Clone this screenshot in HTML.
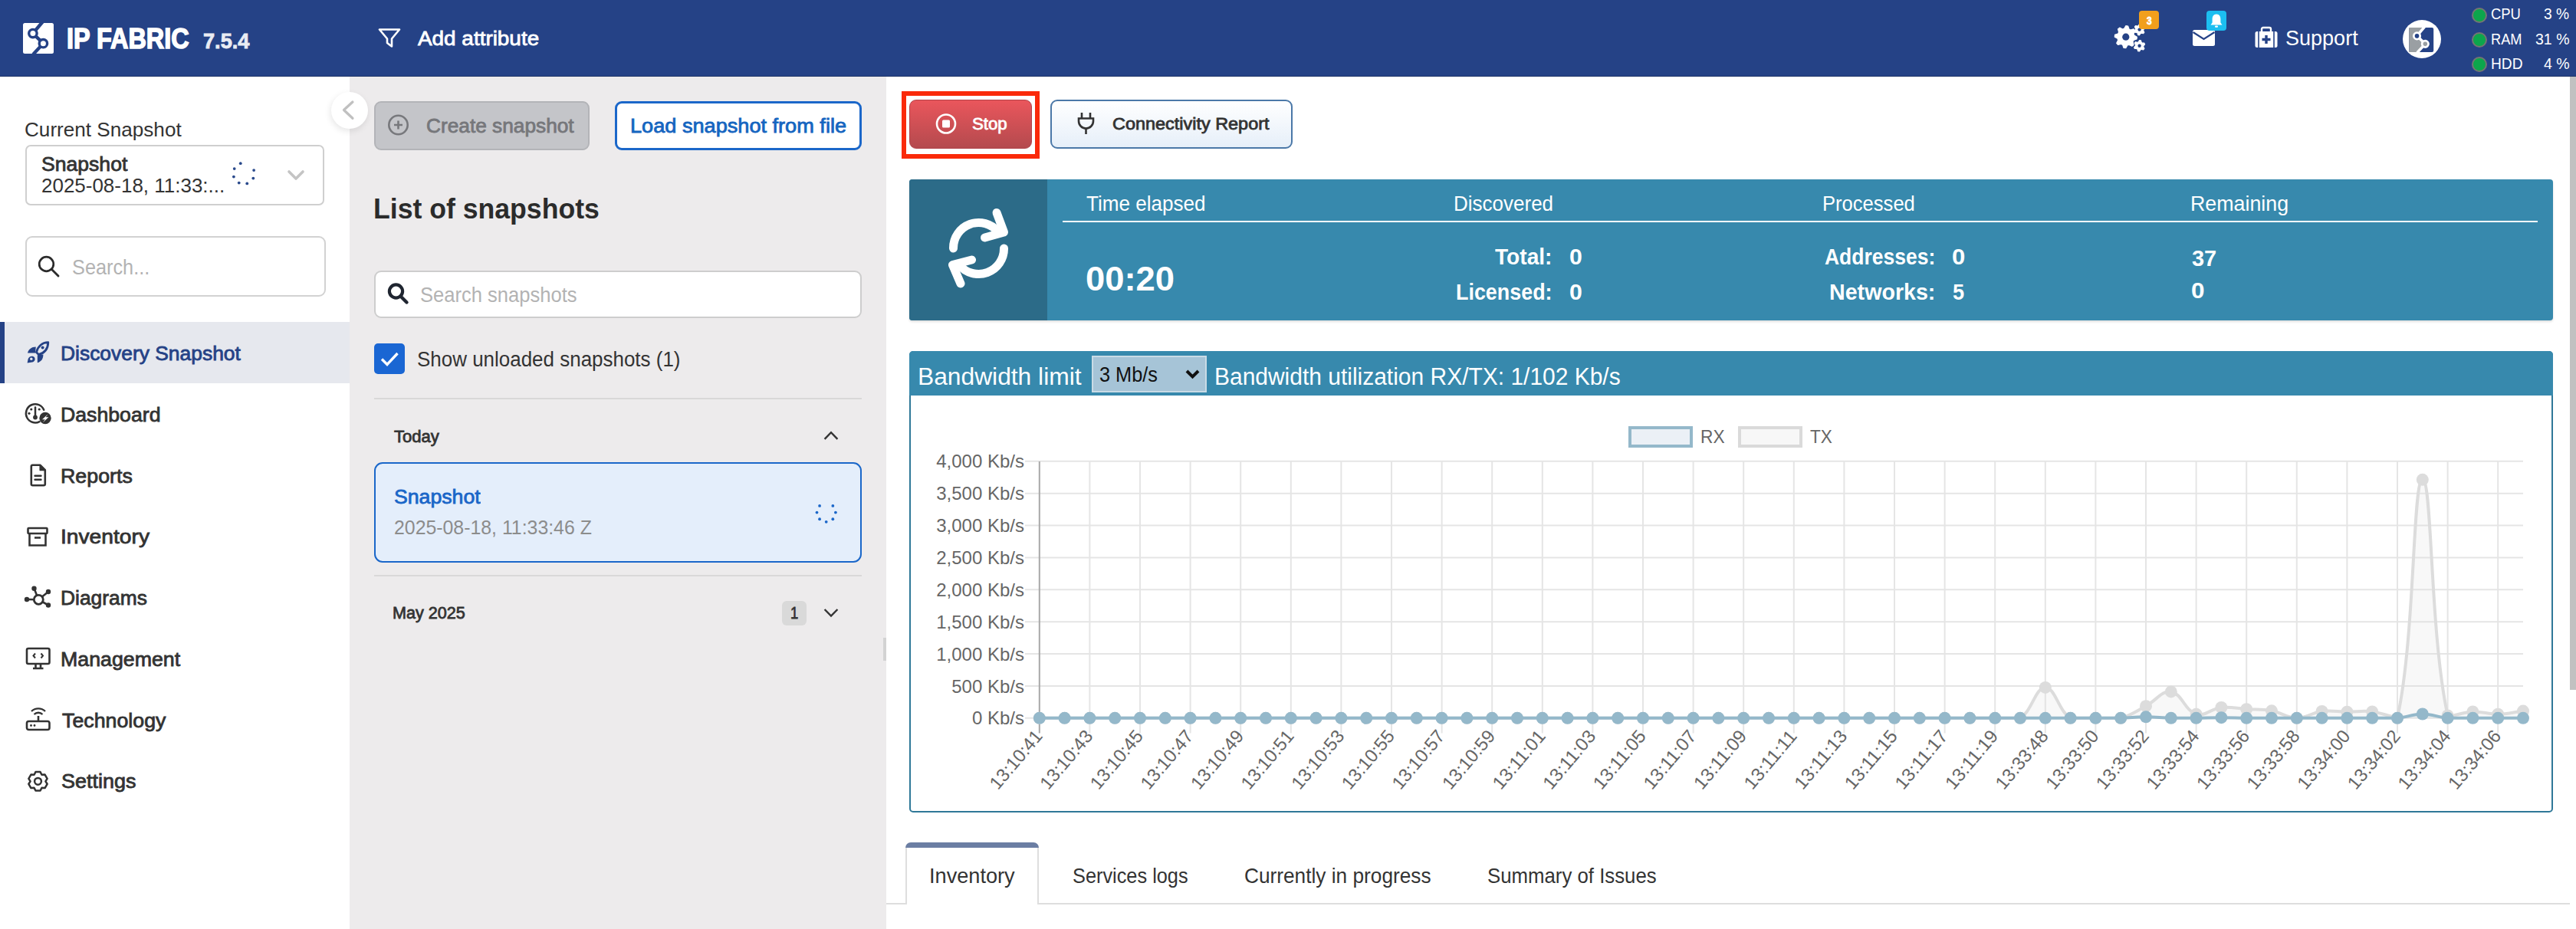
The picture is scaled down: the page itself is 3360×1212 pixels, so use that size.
<!DOCTYPE html>
<html><head><meta charset="utf-8"><title>IP Fabric</title>
<style>
html,body{margin:0;padding:0;width:3360px;height:1212px;overflow:hidden;background:#fff;font-family:"Liberation Sans",sans-serif;}
.a{position:absolute;box-sizing:border-box;}
.t{position:absolute;white-space:nowrap;line-height:1;transform-origin:0 0;font-family:"Liberation Sans",sans-serif;}
svg{position:absolute;overflow:visible;}
</style></head><body>
<div class="a" style="left:0px;top:0px;width:3360px;height:100px;background:#254286;"></div>
<div class="a" style="left:0px;top:99px;width:3360px;height:1px;background:#1f3568;"></div>
<div class="a" style="left:0px;top:100px;width:456px;height:1112px;background:#ffffff;"></div>
<div class="a" style="left:456px;top:100px;width:700px;height:1112px;background:#edebec;"></div>
<div class="a" style="left:3352px;top:100px;width:8px;height:800px;background:#c1c1c1;"></div>
<svg style="left:30px;top:30px" width="40" height="40" viewBox="0 0 40 40"><rect x="0" y="0" width="40" height="40" rx="2.5" fill="#fff"/><path d="M26,-2 L12.9,13.6 L26.4,26.7 L13.2,41" stroke="#254286" stroke-width="4.4" fill="none"/><circle cx="12.9" cy="13.6" r="5.2" fill="#fff" stroke="#254286" stroke-width="3.4"/><circle cx="26.4" cy="26.7" r="5.2" fill="#fff" stroke="#254286" stroke-width="3.4"/></svg>
<svg style="left:492px;top:36px" width="32" height="28" viewBox="0 0 32 28"><path d="M3,2.5 L29,2.5 L19,14.5 L19,24.5 L13,20 L13,14.5 Z" stroke="#fff" stroke-width="2.6" fill="none" stroke-linejoin="round"/></svg>
<svg style="left:2750px;top:20px" width="80" height="60" viewBox="0 0 80 60"><polygon points="22.80,13.70 25.63,13.98 27.01,18.04 28.91,19.05 33.05,17.95 34.86,20.14 32.96,23.99 33.59,26.05 37.30,28.20 37.02,31.03 32.96,32.41 31.95,34.31 33.05,38.45 30.86,40.26 27.01,38.36 24.95,38.99 22.80,42.70 19.97,42.42 18.59,38.36 16.69,37.35 12.55,38.45 10.74,36.26 12.64,32.41 12.01,30.35 8.30,28.20 8.58,25.37 12.64,23.99 13.65,22.09 12.55,17.95 14.74,16.14 18.59,18.04 20.65,17.41" fill="#fff" stroke="#fff" stroke-width="1.2" stroke-linejoin="round"/><circle cx="22.8" cy="28.2" r="4.6" fill="#254286"/><polygon points="40.60,11.40 42.46,11.65 43.20,14.10 44.28,14.92 46.84,15.00 47.55,16.74 45.80,18.60 45.62,19.95 46.84,22.20 45.69,23.69 43.20,23.10 41.95,23.62 40.60,25.80 38.74,25.55 38.00,23.10 36.92,22.28 34.36,22.20 33.65,20.46 35.40,18.60 35.58,17.25 34.36,15.00 35.51,13.51 38.00,14.10 39.25,13.58" fill="#fff" stroke="#fff" stroke-width="1.2" stroke-linejoin="round"/><circle cx="40.6" cy="18.6" r="2.2" fill="#254286"/><polygon points="40.60,32.60 42.46,32.85 43.20,35.30 44.28,36.12 46.84,36.20 47.55,37.94 45.80,39.80 45.62,41.15 46.84,43.40 45.69,44.89 43.20,44.30 41.95,44.82 40.60,47.00 38.74,46.75 38.00,44.30 36.92,43.48 34.36,43.40 33.65,41.66 35.40,39.80 35.58,38.45 34.36,36.20 35.51,34.71 38.00,35.30 39.25,34.78" fill="#fff" stroke="#fff" stroke-width="1.2" stroke-linejoin="round"/><circle cx="40.6" cy="39.8" r="2.2" fill="#254286"/></svg>
<div class="a" style="left:2790px;top:14px;width:26px;height:24px;background:#f29f1c;border-radius:4px;"></div>
<svg style="left:2860px;top:39px" width="29" height="22" viewBox="0 0 29 22"><rect x="0" y="0" width="29" height="21" rx="2.5" fill="#fff"/><path d="M0.5,3 L14.5,12 L28.5,3" stroke="#254286" stroke-width="2.2" fill="none"/></svg>
<div class="a" style="left:2878px;top:14px;width:26px;height:26px;background:#1cbef0;border-radius:4px;"></div>
<svg style="left:2878px;top:14px" width="26" height="26" viewBox="0 0 26 26"><path d="M13,4.5 C9,4.5 7.6,7.5 7.6,11 L7.6,15.5 L5.5,18.5 L20.5,18.5 L18.4,15.5 L18.4,11 C18.4,7.5 17,4.5 13,4.5 Z" fill="#fff"/><rect x="11" y="19.5" width="4" height="2.2" rx="1" fill="#fff"/></svg>
<svg style="left:2941px;top:35px" width="30" height="28" viewBox="0 0 30 28"><rect x="0.5" y="6" width="29" height="21" rx="2.5" fill="#fff"/><rect x="9" y="1" width="12" height="7" rx="2" fill="none" stroke="#fff" stroke-width="2.4"/><rect x="4.2" y="6" width="1.6" height="21" fill="#254286"/><rect x="24.2" y="6" width="1.6" height="21" fill="#254286"/><path d="M15,11 V22 M9.5,16.5 H20.5" stroke="#254286" stroke-width="3.4"/></svg>
<svg style="left:3134px;top:26px" width="50" height="50" viewBox="0 0 50 50"><circle cx="25" cy="25" r="25" fill="#fff"/><g transform="translate(8.2,10) scale(0.8)"><rect x="0" y="0" width="40" height="40" rx="2.5" fill="#254286"/><path d="M0,0 H26 L12.9,13.6 L26.4,26.7 L13.2,40 H0 Z" fill="#9a9fa3"/><path d="M26,-2 L12.9,13.6 L26.4,26.7 L13.2,41" stroke="#fff" stroke-width="4.4" fill="none"/><circle cx="12.9" cy="13.6" r="5.2" fill="#254286" stroke="#fff" stroke-width="3.4"/><circle cx="26.4" cy="26.7" r="5.2" fill="#9a9fa3" stroke="#fff" stroke-width="3.4"/></g></svg>
<div class="a" style="left:3224.0px;top:9.8px;width:20.4px;height:20.4px;border-radius:50%;background:#0ca64c;border:2.2px solid #737573;"></div>
<div class="a" style="left:3224.0px;top:41.599999999999994px;width:20.4px;height:20.4px;border-radius:50%;background:#0ca64c;border:2.2px solid #737573;"></div>
<div class="a" style="left:3224.0px;top:73.8px;width:20.4px;height:20.4px;border-radius:50%;background:#0ca64c;border:2.2px solid #737573;"></div>
<div class="a" style="left:431.5px;top:120px;width:48px;height:48px;border-radius:50%;background:#fff;box-shadow:-1px 3px 8px rgba(0,0,0,0.10);"></div>
<svg style="left:443px;top:132px" width="24" height="24" viewBox="0 0 24 24"><path d="M16.9,1 L5.5,11.5 L16.9,22.3" stroke="#c0c0c0" stroke-width="3.3" fill="none" stroke-linecap="round" stroke-linejoin="round"/></svg>
<div class="a" style="left:33px;top:189px;width:390px;height:79px;border:2px solid #cfcfcf;border-radius:7px;background:#fff;"></div>
<svg style="left:0px;top:0px" width="1" height="1" viewBox="0 0 1 1"><circle cx="313.74" cy="213.18" r="1.9" fill="#2a4a8c"/><circle cx="331.12" cy="222.04" r="1.9" fill="#2a4a8c"/><circle cx="330.30" cy="232.57" r="1.9" fill="#2a4a8c"/><circle cx="322.26" cy="239.42" r="1.9" fill="#2a4a8c"/><circle cx="311.73" cy="238.60" r="1.9" fill="#2a4a8c"/><circle cx="304.88" cy="230.56" r="1.9" fill="#2a4a8c"/><circle cx="305.70" cy="220.03" r="1.9" fill="#2a4a8c"/></svg>
<svg style="left:373px;top:219px" width="28" height="20" viewBox="0 0 28 20"><path d="M4,5 L13,14 L22,5" stroke="#c4c4c4" stroke-width="3.6" fill="none" stroke-linecap="round" stroke-linejoin="round"/></svg>
<div class="a" style="left:33px;top:308px;width:392px;height:79px;border:2px solid #d2d2d2;border-radius:9px;background:#fff;"></div>
<svg style="left:48px;top:332px" width="32" height="32" viewBox="0 0 32 32"><circle cx="12.5" cy="12.5" r="9.3" stroke="#2b2b2b" stroke-width="2.7" fill="none"/><path d="M19.5,19.5 L28,28" stroke="#2b2b2b" stroke-width="2.9" stroke-linecap="round"/></svg>
<div class="a" style="left:0px;top:420px;width:456px;height:80px;background:#e6e8ee;"></div>
<div class="a" style="left:0px;top:420px;width:6px;height:80px;background:#254286;"></div>
<svg style="left:30px;top:440px" width="40" height="40" viewBox="0 0 40 40"><path d="M32.8,6.6 C25,6.8 19.5,12 17.4,19.6 L20.4,22.6 C28,20.5 32.6,15 32.8,6.6 Z" stroke="#254286" stroke-width="2.8" fill="none" stroke-linejoin="round"/><circle cx="25.6" cy="13.4" r="2" fill="#254286"/><path d="M6,20.4 C7.5,15.5 11,12.8 16.8,12.6 L16,20.4 Z" fill="#254286"/><path d="M18.8,33.2 C23.5,32 26.4,28.5 26.4,22.5 L18.8,23.3 Z" fill="#254286"/><path d="M5.6,33.4 L6.6,28.5 C7.5,24.5 12.5,23.5 14.8,26 C16.5,28.5 15.5,31.8 12,32.6 Z" fill="#254286"/><circle cx="10.8" cy="28.3" r="1.7" fill="#e6e8ee"/></svg>
<svg style="left:28px;top:518px" width="44" height="44" viewBox="0 0 44 44"><path d="M29.2,16.8 A12.1,12.1 0 1 0 23.5,32.1" stroke="#333333" stroke-width="2.5" fill="none" stroke-linecap="round"/><path d="M18,13.6 V25" stroke="#333333" stroke-width="2.5" stroke-linecap="round"/><circle cx="18" cy="26.5" r="2.9" fill="#333333"/><circle cx="12.8" cy="16" r="1.6" fill="#333333"/><circle cx="23.2" cy="16" r="1.6" fill="#333333"/><circle cx="10" cy="21.3" r="1.6" fill="#333333"/><circle cx="31" cy="27.5" r="7.7" fill="#333333"/><path d="M34.6,22.3 L27,29.2 L30.8,29.2 L27.8,33.2 L35.4,26.2 L31.6,26.2 Z" fill="#fff"/></svg>
<svg style="left:38px;top:605px" width="24" height="32" viewBox="0 0 24 32"><path d="M2.8,3.5 Q2.8,1.8 4.5,1.8 H14.5 L20.8,8.2 V26.5 Q20.8,28.2 19.1,28.2 H4.5 Q2.8,28.2 2.8,26.5 Z" stroke="#333333" stroke-width="2.6" fill="none" stroke-linejoin="round"/><path d="M14.2,1.8 L21,8.5 H14.2 Z" fill="#333333" stroke="#333333" stroke-width="1.5" stroke-linejoin="round"/><path d="M7.5,15.8 H15.5 M7.5,20.8 H15.5" stroke="#333333" stroke-width="2.4" stroke-linecap="round"/></svg>
<svg style="left:34px;top:685px" width="32" height="32" viewBox="0 0 32 32"><rect x="2.5" y="4" width="25" height="7" rx="1" stroke="#333333" stroke-width="2.6" fill="none"/><path d="M4.5,11 V26.5 H25.5 V11" stroke="#333333" stroke-width="2.6" fill="none"/><path d="M11,16.5 H19" stroke="#333333" stroke-width="2.6"/></svg>
<svg style="left:26px;top:758px" width="50" height="50" viewBox="0 0 50 50"><path d="M24.3,24.3 L18.5,9.8 M24.3,24.3 L37,14 M24.3,24.3 L37,31.5 M24.3,24.3 L9,24" stroke="#333333" stroke-width="2.6"/><circle cx="24.3" cy="24.3" r="6" stroke="#333333" stroke-width="2.8" fill="#fff"/><circle cx="18.5" cy="9.8" r="3.2" fill="#333333"/><circle cx="37" cy="14" r="3.2" fill="#333333"/><circle cx="37" cy="31.5" r="3.2" fill="#333333"/><circle cx="9" cy="24" r="3.2" fill="#333333"/></svg>
<svg style="left:33px;top:844px" width="34" height="32" viewBox="0 0 34 32"><rect x="2" y="2" width="29.5" height="20" rx="2" stroke="#333333" stroke-width="2.6" fill="none"/><path d="M13,8.5 L10.5,11.5 L13,14.5 M20.5,8.5 L23,11.5 L20.5,14.5" stroke="#333333" stroke-width="2" fill="none"/><path d="M13.5,22 V27 M20,22 V27 M10,28 H23.5" stroke="#333333" stroke-width="2.6"/></svg>
<svg style="left:33px;top:923px" width="34" height="32" viewBox="0 0 34 32"><rect x="2" y="18" width="29.5" height="11" rx="2.5" stroke="#333333" stroke-width="2.6" fill="none"/><circle cx="7.5" cy="23.5" r="1.4" fill="#333333"/><circle cx="12" cy="23.5" r="1.4" fill="#333333"/><path d="M17,18 V11" stroke="#333333" stroke-width="2.6"/><path d="M11.5,9 A8,8 0 0 1 22.5,9 M8,5 A13,13 0 0 1 26,5" stroke="#333333" stroke-width="2.4" fill="none"/></svg>
<svg style="left:28px;top:998px" width="42" height="42" viewBox="0 0 42 42"><polygon points="16.55,12.73 18.45,9.07 24.55,9.07 26.45,12.73 30.56,12.55 33.61,17.83 31.40,21.30 33.61,24.77 30.56,30.05 26.45,29.87 24.55,33.53 18.45,33.53 16.55,29.87 12.44,30.05 9.39,24.77 11.60,21.30 9.39,17.83 12.44,12.55" stroke="#333333" stroke-width="2.5" fill="none" stroke-linejoin="round"/><circle cx="21.5" cy="21.3" r="4.4" stroke="#333333" stroke-width="2.5" fill="none"/></svg>
<div class="a" style="left:488px;top:132px;width:281px;height:64px;background:#c4c5c9;border:2px solid #b3b4b8;border-radius:9px;"></div>
<svg style="left:504px;top:149px" width="32" height="30" viewBox="0 0 32 30"><circle cx="15.5" cy="14" r="12.2" stroke="#77787c" stroke-width="2.6" fill="none"/><path d="M15.5,8.5 V19.5 M10,14 H21" stroke="#77787c" stroke-width="2.6"/></svg>
<div class="a" style="left:802px;top:132px;width:322px;height:64px;background:#fff;border:3px solid #1b67c9;border-radius:9px;"></div>
<div class="a" style="left:488px;top:353px;width:636px;height:62px;background:#fff;border:2px solid #cdcdcd;border-radius:9px;"></div>
<svg style="left:504px;top:368px" width="32" height="32" viewBox="0 0 32 32"><circle cx="12.5" cy="12" r="8.6" stroke="#1f2530" stroke-width="4.2" fill="none"/><path d="M18.5,18.5 L26.5,26.5" stroke="#1f2530" stroke-width="4.4" stroke-linecap="round"/></svg>
<div class="a" style="left:488px;top:448px;width:40px;height:40px;background:#1a66d3;border-radius:5px;"></div>
<svg style="left:488px;top:448px" width="40" height="40" viewBox="0 0 40 40"><path d="M10,20.5 L17,27.5 L30.5,13" stroke="#fff" stroke-width="3.4" fill="none"/></svg>
<div class="a" style="left:488px;top:519px;width:636px;height:2px;background:#d9d8d8;"></div>
<svg style="left:1072px;top:558px" width="24" height="22" viewBox="0 0 24 22"><path d="M3.6,14.8 L12,6.2 L20.4,14.8" stroke="#333" stroke-width="2.4" fill="none"/></svg>
<div class="a" style="left:488px;top:603px;width:636px;height:131px;background:#e4eefb;border:2px solid #1b67c9;border-radius:11px;"></div>
<svg style="left:0px;top:0px" width="1" height="1" viewBox="0 0 1 1"><circle cx="1069.07" cy="659.97" r="1.9" fill="#1b67c9"/><circle cx="1086.33" cy="659.97" r="1.9" fill="#1b67c9"/><circle cx="1089.90" cy="668.60" r="1.9" fill="#1b67c9"/><circle cx="1086.33" cy="677.23" r="1.9" fill="#1b67c9"/><circle cx="1077.70" cy="680.80" r="1.9" fill="#1b67c9"/><circle cx="1069.07" cy="677.23" r="1.9" fill="#1b67c9"/><circle cx="1065.50" cy="668.60" r="1.9" fill="#1b67c9"/></svg>
<div class="a" style="left:488px;top:750px;width:636px;height:2px;background:#d9d8d8;"></div>
<div class="a" style="left:1020px;top:784px;width:32px;height:32px;background:#d9d9d9;border-radius:6px;"></div>
<svg style="left:1072px;top:789px" width="24" height="22" viewBox="0 0 24 22"><path d="M3.6,6 L12,14.6 L20.4,6" stroke="#333" stroke-width="2.4" fill="none"/></svg>
<div class="a" style="left:1152px;top:832px;width:4px;height:30px;background:#d3d3d3;"></div>
<div class="a" style="left:1176px;top:119px;width:180px;height:88px;border:6px solid #fa2a0a;"></div>
<div class="a" style="left:1186px;top:130px;width:160px;height:64px;background:linear-gradient(#ea565c,#b44a4e);border:1px solid #b0444a;border-radius:9px;"></div>
<svg style="left:1218px;top:146px" width="32" height="32" viewBox="0 0 32 32"><circle cx="16" cy="15.5" r="12" stroke="#fff" stroke-width="2.6" fill="none"/><rect x="11" y="10.5" width="10" height="10" rx="1.5" fill="#fff"/></svg>
<div class="a" style="left:1370px;top:130px;width:316px;height:64px;background:linear-gradient(#ffffff,#e6eff9);border:2px solid #4b78a8;border-radius:9px;"></div>
<svg style="left:1403px;top:144px" width="28" height="34" viewBox="0 0 28 34"><path d="M8,3 V10 M19,3 V10" stroke="#333" stroke-width="2.6"/><path d="M4,10.5 H23 V14 A9.5,9.5 0 0 1 4,14 Z" stroke="#333" stroke-width="2.6" fill="none"/><path d="M13.5,23.5 V31" stroke="#333" stroke-width="2.6"/></svg>
<div class="a" style="left:1186px;top:234px;width:2144px;height:184px;background:#3789ad;border-radius:4px;box-shadow:0 2px 3px rgba(0,0,0,0.12);"></div>
<div class="a" style="left:1186px;top:234px;width:180px;height:184px;background:#2c6b88;border-radius:4px 0 0 4px;"></div>
<svg style="left:1226px;top:262px" width="100" height="124" viewBox="0 0 100 124"><path d="M17.5,62 A33,33 0 0 1 76,40.5" stroke="#fff" stroke-width="11" fill="none" stroke-linecap="round"/><path d="M74,15.5 L83.5,41 L58.5,48" stroke="#fff" stroke-width="11" fill="none" stroke-linecap="round" stroke-linejoin="round"/><path d="M83.5,62 A33,33 0 0 1 25,83.5" stroke="#fff" stroke-width="11" fill="none" stroke-linecap="round"/><path d="M41.5,77 L16.5,83.5 L27,108" stroke="#fff" stroke-width="11" fill="none" stroke-linecap="round" stroke-linejoin="round"/></svg>
<div class="a" style="left:1386px;top:288px;width:1924px;height:2px;background:#ffffff;"></div>
<div class="a" style="left:1186px;top:458px;width:2144px;height:602px;border:2px solid #2f7898;border-radius:5px;background:#fff;"></div>
<div class="a" style="left:1186px;top:458px;width:2144px;height:58px;background:#3789ad;border-radius:5px 5px 0 0;"></div>
<div class="a" style="left:1424px;top:464px;width:150px;height:48px;background:#a6c4d7;border:2px solid #c9dbe6;"></div>
<svg style="left:1544px;top:478px" width="24" height="22" viewBox="0 0 24 22"><path d="M4,6 L11.5,13.5 L19,6" stroke="#111" stroke-width="4" fill="none"/></svg>
<div class="a" style="left:2124px;top:556px;width:84px;height:28px;background:#ebf0f6;border:4px solid #94b8ca;"></div>
<div class="a" style="left:2267px;top:556px;width:84px;height:28px;background:#f7f7f7;border:4px solid #dadada;"></div>
<svg style="left:0px;top:0px" width="3360" height="1212" viewBox="0 0 3360 1212"><path d="M1337,936.8 H3291" stroke="#e5e5e5" stroke-width="2"/><path d="M1337,894.9 H3291" stroke="#e5e5e5" stroke-width="2"/><path d="M1337,853.0 H3291" stroke="#e5e5e5" stroke-width="2"/><path d="M1337,811.2 H3291" stroke="#e5e5e5" stroke-width="2"/><path d="M1337,769.3 H3291" stroke="#e5e5e5" stroke-width="2"/><path d="M1337,727.4 H3291" stroke="#e5e5e5" stroke-width="2"/><path d="M1337,685.5 H3291" stroke="#e5e5e5" stroke-width="2"/><path d="M1337,643.7 H3291" stroke="#e5e5e5" stroke-width="2"/><path d="M1337,601.8 H3291" stroke="#e5e5e5" stroke-width="2"/><path d="M1355.8,602 V956.5" stroke="#a8a8a8" stroke-width="2"/><path d="M1421.4,602 V956.5" stroke="#e5e5e5" stroke-width="2"/><path d="M1487.0,602 V956.5" stroke="#e5e5e5" stroke-width="2"/><path d="M1552.6,602 V956.5" stroke="#e5e5e5" stroke-width="2"/><path d="M1618.2,602 V956.5" stroke="#e5e5e5" stroke-width="2"/><path d="M1683.8,602 V956.5" stroke="#e5e5e5" stroke-width="2"/><path d="M1749.4,602 V956.5" stroke="#e5e5e5" stroke-width="2"/><path d="M1815.0,602 V956.5" stroke="#e5e5e5" stroke-width="2"/><path d="M1880.6,602 V956.5" stroke="#e5e5e5" stroke-width="2"/><path d="M1946.2,602 V956.5" stroke="#e5e5e5" stroke-width="2"/><path d="M2011.8,602 V956.5" stroke="#e5e5e5" stroke-width="2"/><path d="M2077.4,602 V956.5" stroke="#e5e5e5" stroke-width="2"/><path d="M2143.0,602 V956.5" stroke="#e5e5e5" stroke-width="2"/><path d="M2208.6,602 V956.5" stroke="#e5e5e5" stroke-width="2"/><path d="M2274.2,602 V956.5" stroke="#e5e5e5" stroke-width="2"/><path d="M2339.8,602 V956.5" stroke="#e5e5e5" stroke-width="2"/><path d="M2405.4,602 V956.5" stroke="#e5e5e5" stroke-width="2"/><path d="M2471.0,602 V956.5" stroke="#e5e5e5" stroke-width="2"/><path d="M2536.6,602 V956.5" stroke="#e5e5e5" stroke-width="2"/><path d="M2602.2,602 V956.5" stroke="#e5e5e5" stroke-width="2"/><path d="M2667.8,602 V956.5" stroke="#e5e5e5" stroke-width="2"/><path d="M2733.4,602 V956.5" stroke="#e5e5e5" stroke-width="2"/><path d="M2799.0,602 V956.5" stroke="#e5e5e5" stroke-width="2"/><path d="M2864.6,602 V956.5" stroke="#e5e5e5" stroke-width="2"/><path d="M2930.2,602 V956.5" stroke="#e5e5e5" stroke-width="2"/><path d="M2995.8,602 V956.5" stroke="#e5e5e5" stroke-width="2"/><path d="M3061.4,602 V956.5" stroke="#e5e5e5" stroke-width="2"/><path d="M3127.0,602 V956.5" stroke="#e5e5e5" stroke-width="2"/><path d="M3192.6,602 V956.5" stroke="#e5e5e5" stroke-width="2"/><path d="M3258.2,602 V956.5" stroke="#e5e5e5" stroke-width="2"/><text x="1336" y="945.4" text-anchor="end" font-size="24" fill="#666" font-family="Liberation Sans">0 Kb/s</text><text x="1336" y="903.5" text-anchor="end" font-size="24" fill="#666" font-family="Liberation Sans">500 Kb/s</text><text x="1336" y="861.6" text-anchor="end" font-size="24" fill="#666" font-family="Liberation Sans">1,000 Kb/s</text><text x="1336" y="819.8" text-anchor="end" font-size="24" fill="#666" font-family="Liberation Sans">1,500 Kb/s</text><text x="1336" y="777.9" text-anchor="end" font-size="24" fill="#666" font-family="Liberation Sans">2,000 Kb/s</text><text x="1336" y="736.0" text-anchor="end" font-size="24" fill="#666" font-family="Liberation Sans">2,500 Kb/s</text><text x="1336" y="694.1" text-anchor="end" font-size="24" fill="#666" font-family="Liberation Sans">3,000 Kb/s</text><text x="1336" y="652.3" text-anchor="end" font-size="24" fill="#666" font-family="Liberation Sans">3,500 Kb/s</text><text x="1336" y="610.4" text-anchor="end" font-size="24" fill="#666" font-family="Liberation Sans">4,000 Kb/s</text><text transform="translate(1361.0,961) rotate(-50)" text-anchor="end" textLength="92" lengthAdjust="spacingAndGlyphs" font-size="24" fill="#666" font-family="Liberation Sans">13:10:41</text><text transform="translate(1426.6,961) rotate(-50)" text-anchor="end" textLength="92" lengthAdjust="spacingAndGlyphs" font-size="24" fill="#666" font-family="Liberation Sans">13:10:43</text><text transform="translate(1492.2,961) rotate(-50)" text-anchor="end" textLength="92" lengthAdjust="spacingAndGlyphs" font-size="24" fill="#666" font-family="Liberation Sans">13:10:45</text><text transform="translate(1557.8,961) rotate(-50)" text-anchor="end" textLength="92" lengthAdjust="spacingAndGlyphs" font-size="24" fill="#666" font-family="Liberation Sans">13:10:47</text><text transform="translate(1623.4,961) rotate(-50)" text-anchor="end" textLength="92" lengthAdjust="spacingAndGlyphs" font-size="24" fill="#666" font-family="Liberation Sans">13:10:49</text><text transform="translate(1689.0,961) rotate(-50)" text-anchor="end" textLength="92" lengthAdjust="spacingAndGlyphs" font-size="24" fill="#666" font-family="Liberation Sans">13:10:51</text><text transform="translate(1754.6,961) rotate(-50)" text-anchor="end" textLength="92" lengthAdjust="spacingAndGlyphs" font-size="24" fill="#666" font-family="Liberation Sans">13:10:53</text><text transform="translate(1820.2,961) rotate(-50)" text-anchor="end" textLength="92" lengthAdjust="spacingAndGlyphs" font-size="24" fill="#666" font-family="Liberation Sans">13:10:55</text><text transform="translate(1885.8,961) rotate(-50)" text-anchor="end" textLength="92" lengthAdjust="spacingAndGlyphs" font-size="24" fill="#666" font-family="Liberation Sans">13:10:57</text><text transform="translate(1951.4,961) rotate(-50)" text-anchor="end" textLength="92" lengthAdjust="spacingAndGlyphs" font-size="24" fill="#666" font-family="Liberation Sans">13:10:59</text><text transform="translate(2017.0,961) rotate(-50)" text-anchor="end" textLength="92" lengthAdjust="spacingAndGlyphs" font-size="24" fill="#666" font-family="Liberation Sans">13:11:01</text><text transform="translate(2082.6,961) rotate(-50)" text-anchor="end" textLength="92" lengthAdjust="spacingAndGlyphs" font-size="24" fill="#666" font-family="Liberation Sans">13:11:03</text><text transform="translate(2148.2,961) rotate(-50)" text-anchor="end" textLength="92" lengthAdjust="spacingAndGlyphs" font-size="24" fill="#666" font-family="Liberation Sans">13:11:05</text><text transform="translate(2213.8,961) rotate(-50)" text-anchor="end" textLength="92" lengthAdjust="spacingAndGlyphs" font-size="24" fill="#666" font-family="Liberation Sans">13:11:07</text><text transform="translate(2279.4,961) rotate(-50)" text-anchor="end" textLength="92" lengthAdjust="spacingAndGlyphs" font-size="24" fill="#666" font-family="Liberation Sans">13:11:09</text><text transform="translate(2345.0,961) rotate(-50)" text-anchor="end" textLength="92" lengthAdjust="spacingAndGlyphs" font-size="24" fill="#666" font-family="Liberation Sans">13:11:11</text><text transform="translate(2410.6,961) rotate(-50)" text-anchor="end" textLength="92" lengthAdjust="spacingAndGlyphs" font-size="24" fill="#666" font-family="Liberation Sans">13:11:13</text><text transform="translate(2476.2,961) rotate(-50)" text-anchor="end" textLength="92" lengthAdjust="spacingAndGlyphs" font-size="24" fill="#666" font-family="Liberation Sans">13:11:15</text><text transform="translate(2541.8,961) rotate(-50)" text-anchor="end" textLength="92" lengthAdjust="spacingAndGlyphs" font-size="24" fill="#666" font-family="Liberation Sans">13:11:17</text><text transform="translate(2607.4,961) rotate(-50)" text-anchor="end" textLength="92" lengthAdjust="spacingAndGlyphs" font-size="24" fill="#666" font-family="Liberation Sans">13:11:19</text><text transform="translate(2673.0,961) rotate(-50)" text-anchor="end" textLength="92" lengthAdjust="spacingAndGlyphs" font-size="24" fill="#666" font-family="Liberation Sans">13:33:48</text><text transform="translate(2738.6,961) rotate(-50)" text-anchor="end" textLength="92" lengthAdjust="spacingAndGlyphs" font-size="24" fill="#666" font-family="Liberation Sans">13:33:50</text><text transform="translate(2804.2,961) rotate(-50)" text-anchor="end" textLength="92" lengthAdjust="spacingAndGlyphs" font-size="24" fill="#666" font-family="Liberation Sans">13:33:52</text><text transform="translate(2869.8,961) rotate(-50)" text-anchor="end" textLength="92" lengthAdjust="spacingAndGlyphs" font-size="24" fill="#666" font-family="Liberation Sans">13:33:54</text><text transform="translate(2935.4,961) rotate(-50)" text-anchor="end" textLength="92" lengthAdjust="spacingAndGlyphs" font-size="24" fill="#666" font-family="Liberation Sans">13:33:56</text><text transform="translate(3001.0,961) rotate(-50)" text-anchor="end" textLength="92" lengthAdjust="spacingAndGlyphs" font-size="24" fill="#666" font-family="Liberation Sans">13:33:58</text><text transform="translate(3066.6,961) rotate(-50)" text-anchor="end" textLength="92" lengthAdjust="spacingAndGlyphs" font-size="24" fill="#666" font-family="Liberation Sans">13:34:00</text><text transform="translate(3132.2,961) rotate(-50)" text-anchor="end" textLength="92" lengthAdjust="spacingAndGlyphs" font-size="24" fill="#666" font-family="Liberation Sans">13:34:02</text><text transform="translate(3197.8,961) rotate(-50)" text-anchor="end" textLength="92" lengthAdjust="spacingAndGlyphs" font-size="24" fill="#666" font-family="Liberation Sans">13:34:04</text><text transform="translate(3263.4,961) rotate(-50)" text-anchor="end" textLength="92" lengthAdjust="spacingAndGlyphs" font-size="24" fill="#666" font-family="Liberation Sans">13:34:06</text><path d="M1355.80,936.80 C1368.92,936.80 1375.48,936.80 1388.60,936.80 C1401.72,936.80 1408.28,936.80 1421.40,936.80 C1434.52,936.80 1441.08,936.80 1454.20,936.80 C1467.32,936.80 1473.88,936.80 1487.00,936.80 C1500.12,936.80 1506.68,936.80 1519.80,936.80 C1532.92,936.80 1539.48,936.80 1552.60,936.80 C1565.72,936.80 1572.28,936.80 1585.40,936.80 C1598.52,936.80 1605.08,936.80 1618.20,936.80 C1631.32,936.80 1637.88,936.80 1651.00,936.80 C1664.12,936.80 1670.68,936.80 1683.80,936.80 C1696.92,936.80 1703.48,936.80 1716.60,936.80 C1729.72,936.80 1736.28,936.80 1749.40,936.80 C1762.52,936.80 1769.08,936.80 1782.20,936.80 C1795.32,936.80 1801.88,936.80 1815.00,936.80 C1828.12,936.80 1834.68,936.80 1847.80,936.80 C1860.92,936.80 1867.48,936.80 1880.60,936.80 C1893.72,936.80 1900.28,936.80 1913.40,936.80 C1926.52,936.80 1933.08,936.80 1946.20,936.80 C1959.32,936.80 1965.88,936.80 1979.00,936.80 C1992.12,936.80 1998.68,936.80 2011.80,936.80 C2024.92,936.80 2031.48,936.80 2044.60,936.80 C2057.72,936.80 2064.28,936.80 2077.40,936.80 C2090.52,936.80 2097.08,936.80 2110.20,936.80 C2123.32,936.80 2129.88,936.80 2143.00,936.80 C2156.12,936.80 2162.68,936.80 2175.80,936.80 C2188.92,936.80 2195.48,936.80 2208.60,936.80 C2221.72,936.80 2228.28,936.80 2241.40,936.80 C2254.52,936.80 2261.08,936.80 2274.20,936.80 C2287.32,936.80 2293.88,936.80 2307.00,936.80 C2320.12,936.80 2326.68,936.80 2339.80,936.80 C2352.92,936.80 2359.48,936.80 2372.60,936.80 C2385.72,936.80 2392.28,936.80 2405.40,936.80 C2418.52,936.80 2425.08,936.80 2438.20,936.80 C2451.32,936.80 2457.88,936.80 2471.00,936.80 C2484.12,936.80 2490.68,936.80 2503.80,936.80 C2516.92,936.80 2523.48,936.80 2536.60,936.80 C2549.72,936.80 2556.28,936.80 2569.40,936.80 C2582.52,936.80 2589.08,936.80 2602.20,936.80 C2615.32,936.80 2624.81,936.80 2635.00,936.80 C2651.05,927.05 2654.68,896.93 2667.80,896.93 C2680.92,896.93 2684.55,927.05 2700.60,936.80 C2710.79,936.80 2720.28,936.80 2733.40,936.80 C2746.52,936.80 2753.75,936.80 2766.20,936.80 C2779.99,933.51 2786.13,927.88 2799.00,921.14 C2812.37,914.14 2819.67,900.51 2831.80,902.46 C2845.91,904.73 2849.80,927.06 2864.60,931.69 C2876.04,935.27 2884.07,924.31 2897.40,922.98 C2910.31,921.70 2917.08,924.29 2930.20,925.16 C2943.32,926.03 2950.13,925.05 2963.00,927.34 C2976.37,929.71 2982.65,936.67 2995.80,936.80 C3008.89,936.80 3015.25,929.66 3028.60,928.01 C3041.49,926.41 3048.28,928.59 3061.40,928.68 C3074.52,928.76 3081.29,926.83 3094.20,928.42 C3107.53,930.08 3124.44,936.80 3127.00,936.80 C3150.68,827.59 3146.61,626.51 3159.80,625.84 C3172.85,625.17 3168.90,824.14 3192.60,933.45 C3195.14,936.80 3212.24,928.76 3225.40,928.42 C3238.48,928.09 3245.10,931.94 3258.20,931.77 C3271.34,931.61 3277.88,929.26 3291.00,927.59 L3291.00,936.8 L1355.8,936.8 Z" fill="rgba(220,220,220,0.2)"/><path d="M1355.80,936.80 C1368.92,936.80 1375.48,936.80 1388.60,936.80 C1401.72,936.80 1408.28,936.80 1421.40,936.80 C1434.52,936.80 1441.08,936.80 1454.20,936.80 C1467.32,936.80 1473.88,936.80 1487.00,936.80 C1500.12,936.80 1506.68,936.80 1519.80,936.80 C1532.92,936.80 1539.48,936.80 1552.60,936.80 C1565.72,936.80 1572.28,936.80 1585.40,936.80 C1598.52,936.80 1605.08,936.80 1618.20,936.80 C1631.32,936.80 1637.88,936.80 1651.00,936.80 C1664.12,936.80 1670.68,936.80 1683.80,936.80 C1696.92,936.80 1703.48,936.80 1716.60,936.80 C1729.72,936.80 1736.28,936.80 1749.40,936.80 C1762.52,936.80 1769.08,936.80 1782.20,936.80 C1795.32,936.80 1801.88,936.80 1815.00,936.80 C1828.12,936.80 1834.68,936.80 1847.80,936.80 C1860.92,936.80 1867.48,936.80 1880.60,936.80 C1893.72,936.80 1900.28,936.80 1913.40,936.80 C1926.52,936.80 1933.08,936.80 1946.20,936.80 C1959.32,936.80 1965.88,936.80 1979.00,936.80 C1992.12,936.80 1998.68,936.80 2011.80,936.80 C2024.92,936.80 2031.48,936.80 2044.60,936.80 C2057.72,936.80 2064.28,936.80 2077.40,936.80 C2090.52,936.80 2097.08,936.80 2110.20,936.80 C2123.32,936.80 2129.88,936.80 2143.00,936.80 C2156.12,936.80 2162.68,936.80 2175.80,936.80 C2188.92,936.80 2195.48,936.80 2208.60,936.80 C2221.72,936.80 2228.28,936.80 2241.40,936.80 C2254.52,936.80 2261.08,936.80 2274.20,936.80 C2287.32,936.80 2293.88,936.80 2307.00,936.80 C2320.12,936.80 2326.68,936.80 2339.80,936.80 C2352.92,936.80 2359.48,936.80 2372.60,936.80 C2385.72,936.80 2392.28,936.80 2405.40,936.80 C2418.52,936.80 2425.08,936.80 2438.20,936.80 C2451.32,936.80 2457.88,936.80 2471.00,936.80 C2484.12,936.80 2490.68,936.80 2503.80,936.80 C2516.92,936.80 2523.48,936.80 2536.60,936.80 C2549.72,936.80 2556.28,936.80 2569.40,936.80 C2582.52,936.80 2589.08,936.80 2602.20,936.80 C2615.32,936.80 2621.88,936.80 2635.00,936.80 C2648.12,936.80 2654.68,936.80 2667.80,936.80 C2680.92,936.80 2687.48,936.80 2700.60,936.80 C2713.72,936.80 2720.28,936.80 2733.40,936.80 C2746.52,936.80 2753.09,936.80 2766.20,936.80 C2779.33,936.50 2785.88,935.29 2799.00,935.29 C2812.12,935.29 2818.67,936.50 2831.80,936.80 C2844.91,936.80 2851.48,936.80 2864.60,936.80 C2877.72,936.67 2884.28,936.13 2897.40,936.13 C2910.52,936.13 2917.08,936.67 2930.20,936.80 C2943.32,936.80 2949.88,936.80 2963.00,936.80 C2976.12,936.80 2982.68,936.80 2995.80,936.80 C3008.92,936.80 3015.48,936.80 3028.60,936.80 C3041.72,936.80 3048.28,936.80 3061.40,936.80 C3074.52,936.80 3081.08,936.80 3094.20,936.80 C3107.32,936.80 3113.96,936.80 3127.00,936.80 C3140.20,935.74 3146.68,931.52 3159.80,931.52 C3172.92,931.52 3179.40,935.74 3192.60,936.80 C3205.64,936.80 3212.28,936.80 3225.40,936.80 C3238.52,936.80 3245.08,936.80 3258.20,936.80 C3271.32,936.80 3277.88,936.80 3291.00,936.80 L3291.00,936.8 L1355.8,936.8 Z" fill="rgba(148,184,202,0.1)"/><path d="M1355.80,936.80 C1368.92,936.80 1375.48,936.80 1388.60,936.80 C1401.72,936.80 1408.28,936.80 1421.40,936.80 C1434.52,936.80 1441.08,936.80 1454.20,936.80 C1467.32,936.80 1473.88,936.80 1487.00,936.80 C1500.12,936.80 1506.68,936.80 1519.80,936.80 C1532.92,936.80 1539.48,936.80 1552.60,936.80 C1565.72,936.80 1572.28,936.80 1585.40,936.80 C1598.52,936.80 1605.08,936.80 1618.20,936.80 C1631.32,936.80 1637.88,936.80 1651.00,936.80 C1664.12,936.80 1670.68,936.80 1683.80,936.80 C1696.92,936.80 1703.48,936.80 1716.60,936.80 C1729.72,936.80 1736.28,936.80 1749.40,936.80 C1762.52,936.80 1769.08,936.80 1782.20,936.80 C1795.32,936.80 1801.88,936.80 1815.00,936.80 C1828.12,936.80 1834.68,936.80 1847.80,936.80 C1860.92,936.80 1867.48,936.80 1880.60,936.80 C1893.72,936.80 1900.28,936.80 1913.40,936.80 C1926.52,936.80 1933.08,936.80 1946.20,936.80 C1959.32,936.80 1965.88,936.80 1979.00,936.80 C1992.12,936.80 1998.68,936.80 2011.80,936.80 C2024.92,936.80 2031.48,936.80 2044.60,936.80 C2057.72,936.80 2064.28,936.80 2077.40,936.80 C2090.52,936.80 2097.08,936.80 2110.20,936.80 C2123.32,936.80 2129.88,936.80 2143.00,936.80 C2156.12,936.80 2162.68,936.80 2175.80,936.80 C2188.92,936.80 2195.48,936.80 2208.60,936.80 C2221.72,936.80 2228.28,936.80 2241.40,936.80 C2254.52,936.80 2261.08,936.80 2274.20,936.80 C2287.32,936.80 2293.88,936.80 2307.00,936.80 C2320.12,936.80 2326.68,936.80 2339.80,936.80 C2352.92,936.80 2359.48,936.80 2372.60,936.80 C2385.72,936.80 2392.28,936.80 2405.40,936.80 C2418.52,936.80 2425.08,936.80 2438.20,936.80 C2451.32,936.80 2457.88,936.80 2471.00,936.80 C2484.12,936.80 2490.68,936.80 2503.80,936.80 C2516.92,936.80 2523.48,936.80 2536.60,936.80 C2549.72,936.80 2556.28,936.80 2569.40,936.80 C2582.52,936.80 2589.08,936.80 2602.20,936.80 C2615.32,936.80 2624.81,936.80 2635.00,936.80 C2651.05,927.05 2654.68,896.93 2667.80,896.93 C2680.92,896.93 2684.55,927.05 2700.60,936.80 C2710.79,936.80 2720.28,936.80 2733.40,936.80 C2746.52,936.80 2753.75,936.80 2766.20,936.80 C2779.99,933.51 2786.13,927.88 2799.00,921.14 C2812.37,914.14 2819.67,900.51 2831.80,902.46 C2845.91,904.73 2849.80,927.06 2864.60,931.69 C2876.04,935.27 2884.07,924.31 2897.40,922.98 C2910.31,921.70 2917.08,924.29 2930.20,925.16 C2943.32,926.03 2950.13,925.05 2963.00,927.34 C2976.37,929.71 2982.65,936.67 2995.80,936.80 C3008.89,936.80 3015.25,929.66 3028.60,928.01 C3041.49,926.41 3048.28,928.59 3061.40,928.68 C3074.52,928.76 3081.29,926.83 3094.20,928.42 C3107.53,930.08 3124.44,936.80 3127.00,936.80 C3150.68,827.59 3146.61,626.51 3159.80,625.84 C3172.85,625.17 3168.90,824.14 3192.60,933.45 C3195.14,936.80 3212.24,928.76 3225.40,928.42 C3238.48,928.09 3245.10,931.94 3258.20,931.77 C3271.34,931.61 3277.88,929.26 3291.00,927.59" stroke="#dcdcdc" stroke-width="4" fill="none"/><circle cx="1355.80" cy="936.80" r="8" fill="#dcdcdc"/><circle cx="1388.60" cy="936.80" r="8" fill="#dcdcdc"/><circle cx="1421.40" cy="936.80" r="8" fill="#dcdcdc"/><circle cx="1454.20" cy="936.80" r="8" fill="#dcdcdc"/><circle cx="1487.00" cy="936.80" r="8" fill="#dcdcdc"/><circle cx="1519.80" cy="936.80" r="8" fill="#dcdcdc"/><circle cx="1552.60" cy="936.80" r="8" fill="#dcdcdc"/><circle cx="1585.40" cy="936.80" r="8" fill="#dcdcdc"/><circle cx="1618.20" cy="936.80" r="8" fill="#dcdcdc"/><circle cx="1651.00" cy="936.80" r="8" fill="#dcdcdc"/><circle cx="1683.80" cy="936.80" r="8" fill="#dcdcdc"/><circle cx="1716.60" cy="936.80" r="8" fill="#dcdcdc"/><circle cx="1749.40" cy="936.80" r="8" fill="#dcdcdc"/><circle cx="1782.20" cy="936.80" r="8" fill="#dcdcdc"/><circle cx="1815.00" cy="936.80" r="8" fill="#dcdcdc"/><circle cx="1847.80" cy="936.80" r="8" fill="#dcdcdc"/><circle cx="1880.60" cy="936.80" r="8" fill="#dcdcdc"/><circle cx="1913.40" cy="936.80" r="8" fill="#dcdcdc"/><circle cx="1946.20" cy="936.80" r="8" fill="#dcdcdc"/><circle cx="1979.00" cy="936.80" r="8" fill="#dcdcdc"/><circle cx="2011.80" cy="936.80" r="8" fill="#dcdcdc"/><circle cx="2044.60" cy="936.80" r="8" fill="#dcdcdc"/><circle cx="2077.40" cy="936.80" r="8" fill="#dcdcdc"/><circle cx="2110.20" cy="936.80" r="8" fill="#dcdcdc"/><circle cx="2143.00" cy="936.80" r="8" fill="#dcdcdc"/><circle cx="2175.80" cy="936.80" r="8" fill="#dcdcdc"/><circle cx="2208.60" cy="936.80" r="8" fill="#dcdcdc"/><circle cx="2241.40" cy="936.80" r="8" fill="#dcdcdc"/><circle cx="2274.20" cy="936.80" r="8" fill="#dcdcdc"/><circle cx="2307.00" cy="936.80" r="8" fill="#dcdcdc"/><circle cx="2339.80" cy="936.80" r="8" fill="#dcdcdc"/><circle cx="2372.60" cy="936.80" r="8" fill="#dcdcdc"/><circle cx="2405.40" cy="936.80" r="8" fill="#dcdcdc"/><circle cx="2438.20" cy="936.80" r="8" fill="#dcdcdc"/><circle cx="2471.00" cy="936.80" r="8" fill="#dcdcdc"/><circle cx="2503.80" cy="936.80" r="8" fill="#dcdcdc"/><circle cx="2536.60" cy="936.80" r="8" fill="#dcdcdc"/><circle cx="2569.40" cy="936.80" r="8" fill="#dcdcdc"/><circle cx="2602.20" cy="936.80" r="8" fill="#dcdcdc"/><circle cx="2635.00" cy="936.80" r="8" fill="#dcdcdc"/><circle cx="2667.80" cy="896.93" r="8" fill="#dcdcdc"/><circle cx="2700.60" cy="936.80" r="8" fill="#dcdcdc"/><circle cx="2733.40" cy="936.80" r="8" fill="#dcdcdc"/><circle cx="2766.20" cy="936.80" r="8" fill="#dcdcdc"/><circle cx="2799.00" cy="921.14" r="8" fill="#dcdcdc"/><circle cx="2831.80" cy="902.46" r="8" fill="#dcdcdc"/><circle cx="2864.60" cy="931.69" r="8" fill="#dcdcdc"/><circle cx="2897.40" cy="922.98" r="8" fill="#dcdcdc"/><circle cx="2930.20" cy="925.16" r="8" fill="#dcdcdc"/><circle cx="2963.00" cy="927.34" r="8" fill="#dcdcdc"/><circle cx="2995.80" cy="936.80" r="8" fill="#dcdcdc"/><circle cx="3028.60" cy="928.01" r="8" fill="#dcdcdc"/><circle cx="3061.40" cy="928.68" r="8" fill="#dcdcdc"/><circle cx="3094.20" cy="928.42" r="8" fill="#dcdcdc"/><circle cx="3127.00" cy="936.80" r="8" fill="#dcdcdc"/><circle cx="3159.80" cy="625.84" r="8" fill="#dcdcdc"/><circle cx="3192.60" cy="933.45" r="8" fill="#dcdcdc"/><circle cx="3225.40" cy="928.42" r="8" fill="#dcdcdc"/><circle cx="3258.20" cy="931.77" r="8" fill="#dcdcdc"/><circle cx="3291.00" cy="927.59" r="8" fill="#dcdcdc"/><path d="M1355.80,936.80 C1368.92,936.80 1375.48,936.80 1388.60,936.80 C1401.72,936.80 1408.28,936.80 1421.40,936.80 C1434.52,936.80 1441.08,936.80 1454.20,936.80 C1467.32,936.80 1473.88,936.80 1487.00,936.80 C1500.12,936.80 1506.68,936.80 1519.80,936.80 C1532.92,936.80 1539.48,936.80 1552.60,936.80 C1565.72,936.80 1572.28,936.80 1585.40,936.80 C1598.52,936.80 1605.08,936.80 1618.20,936.80 C1631.32,936.80 1637.88,936.80 1651.00,936.80 C1664.12,936.80 1670.68,936.80 1683.80,936.80 C1696.92,936.80 1703.48,936.80 1716.60,936.80 C1729.72,936.80 1736.28,936.80 1749.40,936.80 C1762.52,936.80 1769.08,936.80 1782.20,936.80 C1795.32,936.80 1801.88,936.80 1815.00,936.80 C1828.12,936.80 1834.68,936.80 1847.80,936.80 C1860.92,936.80 1867.48,936.80 1880.60,936.80 C1893.72,936.80 1900.28,936.80 1913.40,936.80 C1926.52,936.80 1933.08,936.80 1946.20,936.80 C1959.32,936.80 1965.88,936.80 1979.00,936.80 C1992.12,936.80 1998.68,936.80 2011.80,936.80 C2024.92,936.80 2031.48,936.80 2044.60,936.80 C2057.72,936.80 2064.28,936.80 2077.40,936.80 C2090.52,936.80 2097.08,936.80 2110.20,936.80 C2123.32,936.80 2129.88,936.80 2143.00,936.80 C2156.12,936.80 2162.68,936.80 2175.80,936.80 C2188.92,936.80 2195.48,936.80 2208.60,936.80 C2221.72,936.80 2228.28,936.80 2241.40,936.80 C2254.52,936.80 2261.08,936.80 2274.20,936.80 C2287.32,936.80 2293.88,936.80 2307.00,936.80 C2320.12,936.80 2326.68,936.80 2339.80,936.80 C2352.92,936.80 2359.48,936.80 2372.60,936.80 C2385.72,936.80 2392.28,936.80 2405.40,936.80 C2418.52,936.80 2425.08,936.80 2438.20,936.80 C2451.32,936.80 2457.88,936.80 2471.00,936.80 C2484.12,936.80 2490.68,936.80 2503.80,936.80 C2516.92,936.80 2523.48,936.80 2536.60,936.80 C2549.72,936.80 2556.28,936.80 2569.40,936.80 C2582.52,936.80 2589.08,936.80 2602.20,936.80 C2615.32,936.80 2621.88,936.80 2635.00,936.80 C2648.12,936.80 2654.68,936.80 2667.80,936.80 C2680.92,936.80 2687.48,936.80 2700.60,936.80 C2713.72,936.80 2720.28,936.80 2733.40,936.80 C2746.52,936.80 2753.09,936.80 2766.20,936.80 C2779.33,936.50 2785.88,935.29 2799.00,935.29 C2812.12,935.29 2818.67,936.50 2831.80,936.80 C2844.91,936.80 2851.48,936.80 2864.60,936.80 C2877.72,936.67 2884.28,936.13 2897.40,936.13 C2910.52,936.13 2917.08,936.67 2930.20,936.80 C2943.32,936.80 2949.88,936.80 2963.00,936.80 C2976.12,936.80 2982.68,936.80 2995.80,936.80 C3008.92,936.80 3015.48,936.80 3028.60,936.80 C3041.72,936.80 3048.28,936.80 3061.40,936.80 C3074.52,936.80 3081.08,936.80 3094.20,936.80 C3107.32,936.80 3113.96,936.80 3127.00,936.80 C3140.20,935.74 3146.68,931.52 3159.80,931.52 C3172.92,931.52 3179.40,935.74 3192.60,936.80 C3205.64,936.80 3212.28,936.80 3225.40,936.80 C3238.52,936.80 3245.08,936.80 3258.20,936.80 C3271.32,936.80 3277.88,936.80 3291.00,936.80" stroke="#94b8ca" stroke-width="4" fill="none"/><circle cx="1355.80" cy="936.80" r="8" fill="#94b8ca"/><circle cx="1388.60" cy="936.80" r="8" fill="#94b8ca"/><circle cx="1421.40" cy="936.80" r="8" fill="#94b8ca"/><circle cx="1454.20" cy="936.80" r="8" fill="#94b8ca"/><circle cx="1487.00" cy="936.80" r="8" fill="#94b8ca"/><circle cx="1519.80" cy="936.80" r="8" fill="#94b8ca"/><circle cx="1552.60" cy="936.80" r="8" fill="#94b8ca"/><circle cx="1585.40" cy="936.80" r="8" fill="#94b8ca"/><circle cx="1618.20" cy="936.80" r="8" fill="#94b8ca"/><circle cx="1651.00" cy="936.80" r="8" fill="#94b8ca"/><circle cx="1683.80" cy="936.80" r="8" fill="#94b8ca"/><circle cx="1716.60" cy="936.80" r="8" fill="#94b8ca"/><circle cx="1749.40" cy="936.80" r="8" fill="#94b8ca"/><circle cx="1782.20" cy="936.80" r="8" fill="#94b8ca"/><circle cx="1815.00" cy="936.80" r="8" fill="#94b8ca"/><circle cx="1847.80" cy="936.80" r="8" fill="#94b8ca"/><circle cx="1880.60" cy="936.80" r="8" fill="#94b8ca"/><circle cx="1913.40" cy="936.80" r="8" fill="#94b8ca"/><circle cx="1946.20" cy="936.80" r="8" fill="#94b8ca"/><circle cx="1979.00" cy="936.80" r="8" fill="#94b8ca"/><circle cx="2011.80" cy="936.80" r="8" fill="#94b8ca"/><circle cx="2044.60" cy="936.80" r="8" fill="#94b8ca"/><circle cx="2077.40" cy="936.80" r="8" fill="#94b8ca"/><circle cx="2110.20" cy="936.80" r="8" fill="#94b8ca"/><circle cx="2143.00" cy="936.80" r="8" fill="#94b8ca"/><circle cx="2175.80" cy="936.80" r="8" fill="#94b8ca"/><circle cx="2208.60" cy="936.80" r="8" fill="#94b8ca"/><circle cx="2241.40" cy="936.80" r="8" fill="#94b8ca"/><circle cx="2274.20" cy="936.80" r="8" fill="#94b8ca"/><circle cx="2307.00" cy="936.80" r="8" fill="#94b8ca"/><circle cx="2339.80" cy="936.80" r="8" fill="#94b8ca"/><circle cx="2372.60" cy="936.80" r="8" fill="#94b8ca"/><circle cx="2405.40" cy="936.80" r="8" fill="#94b8ca"/><circle cx="2438.20" cy="936.80" r="8" fill="#94b8ca"/><circle cx="2471.00" cy="936.80" r="8" fill="#94b8ca"/><circle cx="2503.80" cy="936.80" r="8" fill="#94b8ca"/><circle cx="2536.60" cy="936.80" r="8" fill="#94b8ca"/><circle cx="2569.40" cy="936.80" r="8" fill="#94b8ca"/><circle cx="2602.20" cy="936.80" r="8" fill="#94b8ca"/><circle cx="2635.00" cy="936.80" r="8" fill="#94b8ca"/><circle cx="2667.80" cy="936.80" r="8" fill="#94b8ca"/><circle cx="2700.60" cy="936.80" r="8" fill="#94b8ca"/><circle cx="2733.40" cy="936.80" r="8" fill="#94b8ca"/><circle cx="2766.20" cy="936.80" r="8" fill="#94b8ca"/><circle cx="2799.00" cy="935.29" r="8" fill="#94b8ca"/><circle cx="2831.80" cy="936.80" r="8" fill="#94b8ca"/><circle cx="2864.60" cy="936.80" r="8" fill="#94b8ca"/><circle cx="2897.40" cy="936.13" r="8" fill="#94b8ca"/><circle cx="2930.20" cy="936.80" r="8" fill="#94b8ca"/><circle cx="2963.00" cy="936.80" r="8" fill="#94b8ca"/><circle cx="2995.80" cy="936.80" r="8" fill="#94b8ca"/><circle cx="3028.60" cy="936.80" r="8" fill="#94b8ca"/><circle cx="3061.40" cy="936.80" r="8" fill="#94b8ca"/><circle cx="3094.20" cy="936.80" r="8" fill="#94b8ca"/><circle cx="3127.00" cy="936.80" r="8" fill="#94b8ca"/><circle cx="3159.80" cy="931.52" r="8" fill="#94b8ca"/><circle cx="3192.60" cy="936.80" r="8" fill="#94b8ca"/><circle cx="3225.40" cy="936.80" r="8" fill="#94b8ca"/><circle cx="3258.20" cy="936.80" r="8" fill="#94b8ca"/><circle cx="3291.00" cy="936.80" r="8" fill="#94b8ca"/></svg>
<div class="a" style="left:1156px;top:1178px;width:2196px;height:2px;background:#dedede;"></div>
<div class="a" style="left:1181px;top:1100px;width:174px;height:80px;background:#fff;border:2px solid #dedede;border-bottom:none;border-radius:7px 7px 0 0;"></div>
<div class="a" style="left:1181px;top:1099px;width:174px;height:7px;background:#6b7ea3;border-radius:7px 7px 0 0;"></div>
<span class="t" style="left:87.29px;top:31.54px;font-size:37.83px;font-weight:bold;color:#ffffff;-webkit-text-stroke:1.6px #ffffff;transform:scaleX(0.8564)">IP FABRIC</span>
<span class="t" style="left:265.19px;top:40.78px;font-size:26.96px;font-weight:bold;color:#e9ecf3;-webkit-text-stroke:0.8px #e9ecf3;transform:scaleX(1.0075)">7.5.4</span>
<span class="t" style="left:544.60px;top:37.48px;font-size:26.61px;font-weight:normal;color:#ffffff;-webkit-text-stroke:0.8px #ffffff;transform:scaleX(1.0481)">Add attribute</span>
<span class="t" style="left:2799.60px;top:18.82px;font-size:15.51px;font-weight:bold;color:#ffffff;-webkit-text-stroke:0.8px #ffffff;transform:scaleX(0.7667)">3</span>
<span class="t" style="left:2980.53px;top:36.43px;font-size:27.97px;font-weight:normal;color:#ffffff;transform:scaleX(0.9662)">Support</span>
<span class="t" style="left:3248.61px;top:8.39px;font-size:20.72px;font-weight:normal;color:#ffffff;transform:scaleX(0.8903)">CPU</span>
<span class="t" style="left:3318.00px;top:8.39px;font-size:20.72px;font-weight:normal;color:#ffffff;transform:scaleX(0.9297)">3 %</span>
<span class="t" style="left:3248.62px;top:40.99px;font-size:20.72px;font-weight:normal;color:#ffffff;transform:scaleX(0.8794)">RAM</span>
<span class="t" style="left:3306.70px;top:40.99px;font-size:20.72px;font-weight:normal;color:#ffffff;transform:scaleX(0.9423)">31 %</span>
<span class="t" style="left:3248.57px;top:72.79px;font-size:20.72px;font-weight:normal;color:#ffffff;transform:scaleX(0.9272)">HDD</span>
<span class="t" style="left:3317.50px;top:72.79px;font-size:20.72px;font-weight:normal;color:#ffffff;transform:scaleX(0.9439)">4 %</span>
<span class="t" style="left:31.72px;top:155.66px;font-size:26.52px;font-weight:normal;color:#333333;transform:scaleX(0.9848)">Current Snapshot</span>
<span class="t" style="left:54.36px;top:201.97px;font-size:25.45px;font-weight:normal;color:#333333;-webkit-text-stroke:0.8px #333333;transform:scaleX(1.0449)">Snapshot</span>
<span class="t" style="left:54.00px;top:229.65px;font-size:25.94px;font-weight:normal;color:#333333;transform:scaleX(1.0013)">2025-08-18, 11:33:...</span>
<span class="t" style="left:93.87px;top:334.66px;font-size:27.1px;font-weight:normal;color:#b3b3b3;transform:scaleX(0.9339)">Search...</span>
<span class="t" style="left:78.82px;top:448.97px;font-size:25.45px;font-weight:normal;color:#254286;-webkit-text-stroke:0.8px #254286;transform:scaleX(1.0381)">Discovery Snapshot</span>
<span class="t" style="left:78.80px;top:528.97px;font-size:25.45px;font-weight:normal;color:#333333;-webkit-text-stroke:0.8px #333333;transform:scaleX(1.0487)">Dashboard</span>
<span class="t" style="left:78.79px;top:608.57px;font-size:25.45px;font-weight:normal;color:#333333;-webkit-text-stroke:0.8px #333333;transform:scaleX(1.0539)">Reports</span>
<span class="t" style="left:78.68px;top:688.37px;font-size:25.45px;font-weight:normal;color:#333333;-webkit-text-stroke:0.8px #333333;transform:scaleX(1.1087)">Inventory</span>
<span class="t" style="left:78.83px;top:767.87px;font-size:25.45px;font-weight:normal;color:#333333;-webkit-text-stroke:0.8px #333333;transform:scaleX(1.0375)">Diagrams</span>
<span class="t" style="left:78.80px;top:847.67px;font-size:25.45px;font-weight:normal;color:#333333;-webkit-text-stroke:0.8px #333333;transform:scaleX(1.0518)">Management</span>
<span class="t" style="left:80.90px;top:928.17px;font-size:25.45px;font-weight:normal;color:#333333;-webkit-text-stroke:0.8px #333333;transform:scaleX(1.0522)">Technology</span>
<span class="t" style="left:79.84px;top:1007.37px;font-size:25.45px;font-weight:normal;color:#333333;-webkit-text-stroke:0.8px #333333;transform:scaleX(1.0610)">Settings</span>
<span class="t" style="left:556.36px;top:152.21px;font-size:25.16px;font-weight:normal;color:#76777b;-webkit-text-stroke:0.8px #76777b;transform:scaleX(1.0435)">Create snapshot</span>
<span class="t" style="left:821.64px;top:152.21px;font-size:25.16px;font-weight:normal;color:#1565c0;-webkit-text-stroke:0.8px #1565c0;transform:scaleX(1.0785)">Load snapshot from file</span>
<span class="t" style="left:487.40px;top:254.29px;font-size:37.54px;font-weight:bold;color:#2b2b2b;transform:scaleX(0.9489)">List of snapshots</span>
<span class="t" style="left:547.96px;top:370.96px;font-size:27.1px;font-weight:normal;color:#b3b3b3;transform:scaleX(0.9432)">Search snapshots</span>
<span class="t" style="left:544.05px;top:454.92px;font-size:27.39px;font-weight:normal;color:#333333;transform:scaleX(0.9484)">Show unloaded snapshots (1)</span>
<span class="t" style="left:513.80px;top:559.20px;font-size:22.12px;font-weight:normal;color:#333333;-webkit-text-stroke:0.8px #333333;transform:scaleX(0.9976)">Today</span>
<span class="t" style="left:514.36px;top:636.12px;font-size:25.74px;font-weight:normal;color:#1a66c8;-webkit-text-stroke:0.8px #1a66c8;transform:scaleX(1.0363)">Snapshot</span>
<span class="t" style="left:514.04px;top:675.95px;font-size:25.94px;font-weight:normal;color:#8c8c8c;transform:scaleX(0.9578)">2025-08-18, 11:33:46 Z</span>
<span class="t" style="left:512.42px;top:789.20px;font-size:22.12px;font-weight:normal;color:#333333;-webkit-text-stroke:0.8px #333333;transform:scaleX(0.9770)">May 2025</span>
<span class="t" style="left:1030.56px;top:789.20px;font-size:22.12px;font-weight:normal;color:#333333;-webkit-text-stroke:0.8px #333333;transform:scaleX(0.8364)">1</span>
<span class="t" style="left:1268.40px;top:150.90px;font-size:22.12px;font-weight:normal;color:#ffffff;-webkit-text-stroke:0.8px #ffffff;transform:scaleX(1.0049)">Stop</span>
<span class="t" style="left:1450.94px;top:151.10px;font-size:22.12px;font-weight:normal;color:#333333;-webkit-text-stroke:0.8px #333333;transform:scaleX(1.0600)">Connectivity Report</span>
<span class="t" style="left:1417.00px;top:252.47px;font-size:27.68px;font-weight:normal;color:#ffffff;transform:scaleX(0.9426)">Time elapsed</span>
<span class="t" style="left:1895.82px;top:252.47px;font-size:27.68px;font-weight:normal;color:#ffffff;transform:scaleX(0.9398)">Discovered</span>
<span class="t" style="left:2376.75px;top:252.47px;font-size:27.68px;font-weight:normal;color:#ffffff;transform:scaleX(0.9242)">Processed</span>
<span class="t" style="left:2857.46px;top:252.47px;font-size:27.68px;font-weight:normal;color:#ffffff;transform:scaleX(0.9683)">Remaining</span>
<span class="t" style="left:1415.97px;top:342.45px;font-size:44.06px;font-weight:bold;color:#ffffff;transform:scaleX(1.0303)">00:20</span>
<span class="t" style="left:1950.10px;top:321.36px;font-size:28.99px;font-weight:bold;color:#ffffff;transform:scaleX(0.9705)">Total:</span>
<span class="t" style="left:2046.96px;top:321.36px;font-size:28.99px;font-weight:bold;color:#ffffff;transform:scaleX(1.0429)">0</span>
<span class="t" style="left:1898.87px;top:366.66px;font-size:28.99px;font-weight:bold;color:#ffffff;transform:scaleX(0.9282)">Licensed:</span>
<span class="t" style="left:2046.96px;top:366.66px;font-size:28.99px;font-weight:bold;color:#ffffff;transform:scaleX(1.0429)">0</span>
<span class="t" style="left:2380.00px;top:321.36px;font-size:28.99px;font-weight:bold;color:#ffffff;transform:scaleX(0.9135)">Addresses:</span>
<span class="t" style="left:2545.93px;top:321.36px;font-size:28.99px;font-weight:bold;color:#ffffff;transform:scaleX(1.0714)">0</span>
<span class="t" style="left:2386.01px;top:366.66px;font-size:28.99px;font-weight:bold;color:#ffffff;transform:scaleX(0.9877)">Networks:</span>
<span class="t" style="left:2547.00px;top:366.66px;font-size:28.99px;font-weight:bold;color:#ffffff;transform:scaleX(0.9375)">5</span>
<span class="t" style="left:2859.40px;top:323.16px;font-size:28.99px;font-weight:bold;color:#ffffff;transform:scaleX(0.9994)">37</span>
<span class="t" style="left:2858.31px;top:365.36px;font-size:28.99px;font-weight:bold;color:#ffffff;transform:scaleX(1.0857)">0</span>
<span class="t" style="left:1197.41px;top:475.93px;font-size:30.43px;font-weight:normal;color:#ffffff;transform:scaleX(1.0436)">Bandwidth limit</span>
<span class="t" style="left:1434.10px;top:474.38px;font-size:28.26px;font-weight:normal;color:#111111;transform:scaleX(0.8966)">3 Mb/s</span>
<span class="t" style="left:1584.33px;top:475.93px;font-size:30.43px;font-weight:normal;color:#ffffff;transform:scaleX(0.9850)">Bandwidth utilization RX/TX: 1/102 Kb/s</span>
<span class="t" style="left:2217.86px;top:557.66px;font-size:24.64px;font-weight:normal;color:#666666;transform:scaleX(0.9219)">RX</span>
<span class="t" style="left:2360.90px;top:557.66px;font-size:24.64px;font-weight:normal;color:#666666;transform:scaleX(0.9181)">TX</span>
<span class="t" style="left:1212.01px;top:1128.84px;font-size:27.25px;font-weight:normal;color:#333333;transform:scaleX(0.9958)">Inventory</span>
<span class="t" style="left:1398.67px;top:1128.84px;font-size:27.25px;font-weight:normal;color:#333333;transform:scaleX(0.9294)">Services logs</span>
<span class="t" style="left:1623.04px;top:1128.84px;font-size:27.25px;font-weight:normal;color:#333333;transform:scaleX(0.9630)">Currently in progress</span>
<span class="t" style="left:1940.35px;top:1128.84px;font-size:27.25px;font-weight:normal;color:#333333;transform:scaleX(0.9461)">Summary of Issues</span>
</body></html>
